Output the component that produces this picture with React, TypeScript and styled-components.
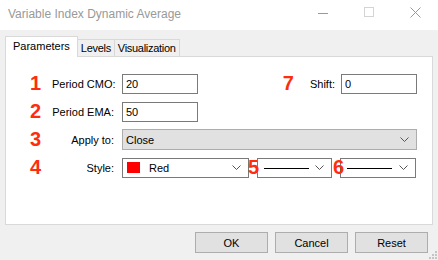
import React from "react";
import styled, { createGlobalStyle } from "styled-components";

const GlobalStyle = createGlobalStyle`
  html, body {
    margin: 0;
    padding: 0;
    background: #f0f0f0;
  }
  body {
    font-family: "Liberation Sans", Arial, sans-serif;
  }
`;

const Chevron = () => (
  <svg width="9" height="5" viewBox="0 0 9 5">
    <path d="M0.5 0.5 L4.5 4.5 L8.5 0.5" fill="none" stroke="#555" strokeWidth="1" />
  </svg>
);

const App: React.FC = () => {
  return (
    <>
      <GlobalStyle />
      <Window>
        <TitleBar>
          <Title>Variable Index Dynamic Average</Title>
          <Controls>
            <ControlButton>
              <svg width="11" height="11" viewBox="0 0 11 11">
                <path d="M0 6.5 H10" stroke="#999" strokeWidth="1" />
              </svg>
            </ControlButton>
            <ControlButton>
              <svg width="11" height="11" viewBox="0 0 11 11">
                <rect x="0.5" y="0.5" width="9" height="9" fill="none" stroke="#d4d4d4" />
              </svg>
            </ControlButton>
            <ControlButton>
              <svg width="11" height="11" viewBox="0 0 11 11">
                <path d="M0.5 0.5 L10.5 10.5 M10.5 0.5 L0.5 10.5" stroke="#999" strokeWidth="1" />
              </svg>
            </ControlButton>
          </Controls>
        </TitleBar>

        <Body>
          <TabRow>
            <Tab $active>Parameters</Tab>
            <Tab>Levels</Tab>
            <Tab>Visualization</Tab>
          </TabRow>

          <Panel>
            <Form>
              <Num>1</Num>
              <Label>Period CMO:</Label>
              <Cell>
                <TextInput $width={76}>20</TextInput>
                <Spacer />
                <Num>7</Num>
                <ShiftLabel>Shift:</ShiftLabel>
                <TextInput $width={76}>0</TextInput>
              </Cell>

              <Num>2</Num>
              <Label>Period EMA:</Label>
              <Cell>
                <TextInput $width={76}>50</TextInput>
              </Cell>

              <Num>3</Num>
              <Label>Apply to:</Label>
              <Cell>
                <Select $width={295} $filled>
                  <SelectText>Close</SelectText>
                  <Chevron />
                </Select>
              </Cell>

              <Num>4</Num>
              <Label>Style:</Label>
              <StyleCell>
                <Select $width={127}>
                  <Swatch />
                  <SelectText>Red</SelectText>
                  <Chevron />
                </Select>
                <OverNum $left={134}>5</OverNum>
                <Select $width={75}>
                  <LineSample />
                  <Chevron />
                </Select>
                <OverNum $left={219}>6</OverNum>
                <Select $width={76}>
                  <LineSample />
                  <Chevron />
                </Select>
              </StyleCell>
            </Form>
          </Panel>

          <ButtonRow>
            <Button>OK</Button>
            <Button>Cancel</Button>
            <Button>Reset</Button>
          </ButtonRow>
        </Body>

        <Grip>
          <svg width="8" height="8" viewBox="0 0 8 8">
            <rect x="6" y="0" width="2" height="2" fill="#c4c4c4" />
            <rect x="3" y="3" width="2" height="2" fill="#c4c4c4" />
            <rect x="6" y="3" width="2" height="2" fill="#c4c4c4" />
            <rect x="0" y="6" width="2" height="2" fill="#c4c4c4" />
            <rect x="3" y="6" width="2" height="2" fill="#c4c4c4" />
            <rect x="6" y="6" width="2" height="2" fill="#c4c4c4" />
          </svg>
        </Grip>
      </Window>
    </>
  );
};

const Window = styled.div`
  position: relative;
  width: 438px;
  height: 260px;
  background: #f0f0f0;
  overflow: hidden;
  font-size: 11px;
  color: #000;
`;

const TitleBar = styled.div`
  display: flex;
  align-items: center;
  height: 30px;
  background: #fff;
  padding-left: 8px;
`;

const Title = styled.div`
  flex: 1;
  font-size: 12px;
  color: #999;
  margin-top: -2px;
`;

const Controls = styled.div`
  display: flex;
  height: 30px;
`;

const ControlButton = styled.div`
  width: 46px;
  height: 30px;
  display: flex;
  align-items: center;
  justify-content: center;
  margin-top: -3px;
`;

const Body = styled.div`
  padding: 6px 5px 0 5px;
`;

const TabRow = styled.div`
  display: flex;
  align-items: flex-end;
  height: 20px;
`;

const Tab = styled.div<{ $active?: boolean }>`
  position: relative;
  z-index: ${(p) => (p.$active ? 1 : 0)};
  box-sizing: border-box;
  height: ${(p) => (p.$active ? "21px" : "17px")};
  margin-bottom: ${(p) => (p.$active ? "-1px" : "0")};
  padding: ${(p) => (p.$active ? "0 7px 2px 7px" : "0 3px 0 3px")};
  display: flex;
  align-items: center;
  background: ${(p) => (p.$active ? "#fff" : "#f0f0f0")};
  border: 1px solid #d9d9d9;
  border-bottom: none;
  border-left: ${(p) => (p.$active ? "1px solid #d9d9d9" : "none")};
  font-size: 11px;
  letter-spacing: ${(p) => (p.$active ? "0" : "-0.3px")};
`;

const Panel = styled.div`
  box-sizing: border-box;
  height: 169px;
  background: #fff;
  border: 1px solid #d9d9d9;
  padding-top: 16px;
`;

const Form = styled.div`
  display: grid;
  grid-template-columns: 46px 62px 1fr;
  grid-auto-rows: 21px;
  row-gap: 7px;
  align-items: center;
`;

const Num = styled.div`
  padding-left: 24px;
  font-size: 20px;
  font-weight: bold;
  color: #fe2d0e;
  line-height: 21px;
`;

const Label = styled.div`
  text-align: right;
  white-space: nowrap;
`;

const Cell = styled.div`
  display: flex;
  align-items: center;
  padding-left: 8px;
  padding-right: 18px;
  height: 21px;
`;

const StyleCell = styled(Cell)`
  position: relative;
  gap: 8px;
  height: 20px;
`;

const Spacer = styled.div`
  flex: 1;
`;

const ShiftLabel = styled.div`
  margin: 0 6px 0 16px;
`;

const TextInput = styled.div<{ $width: number }>`
  box-sizing: border-box;
  width: ${(p) => p.$width}px;
  height: 20px;
  border: 1px solid #7a7a7a;
  background: #fff;
  padding-left: 3px;
  display: flex;
  align-items: center;
`;

const Select = styled.div<{ $width: number; $filled?: boolean }>`
  box-sizing: border-box;
  width: ${(p) => p.$width}px;
  height: ${(p) => (p.$filled ? "21px" : "20px")};
  border: 1px solid ${(p) => (p.$filled ? "#adadad" : "#7a7a7a")};
  background: ${(p) => (p.$filled ? "#e1e1e1" : "#fff")};
  display: flex;
  align-items: center;
  padding: 0 7px 0 3px;
`;

const SelectText = styled.div`
  flex: 1;
`;

const Swatch = styled.div`
  width: 13px;
  height: 11px;
  background: #ff0000;
  margin: 0 9px 0 1px;
`;

const LineSample = styled.div`
  width: 45px;
  height: 1px;
  background: #000;
  margin: 0 auto 0 3px;
  position: relative;
  top: 1px;
`;

const OverNum = styled.div<{ $left: number }>`
  position: absolute;
  top: -1px;
  left: ${(p) => p.$left}px;
  font-size: 20px;
  font-weight: bold;
  color: #fe2d0e;
  line-height: 21px;
`;

const ButtonRow = styled.div`
  display: flex;
  justify-content: flex-end;
  gap: 7px;
  margin-top: 7px;
  padding-right: 5px;
`;

const Button = styled.div`
  box-sizing: border-box;
  width: 73px;
  height: 21px;
  background: #e1e1e1;
  border: 1px solid #adadad;
  display: flex;
  align-items: center;
  justify-content: center;
  font-size: 11px;
`;

const Grip = styled.div`
  position: absolute;
  right: 1px;
  bottom: 1px;
  display: flex;
`;

export default App;
